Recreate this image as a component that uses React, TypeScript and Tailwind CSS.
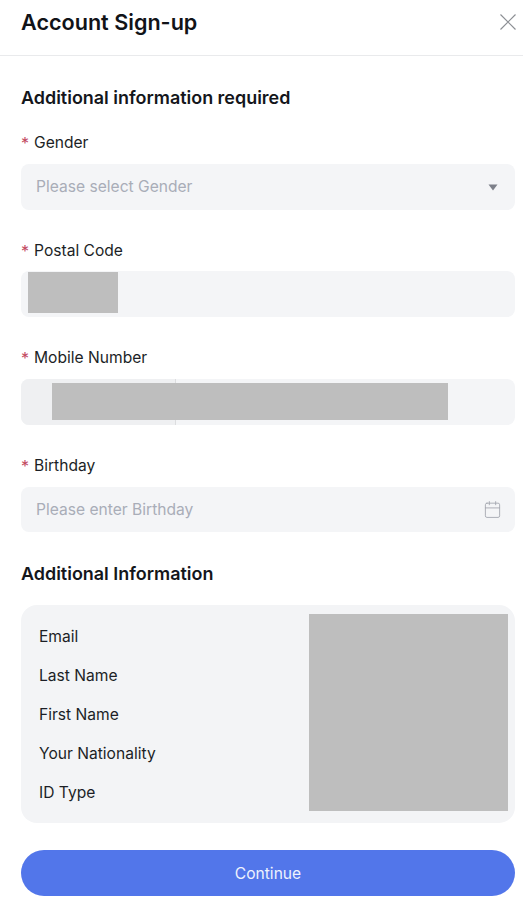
import { Calendar } from "lucide-react";

const font = { fontFamily: '"Inter", "Liberation Sans", sans-serif' };

function Label({ text }: { text: string }) {
  return (
    <div className="flex h-[22px] translate-y-[1px] items-center text-[15.6px] leading-[22px] text-[#1c1f26]">
      <span className="mr-[5px] text-[16px] text-[#c2495f]">*</span>
      {text}
    </div>
  );
}

const infoRows = ["Email", "Last Name", "First Name", "Your Nationality", "ID Type"];

export default function App() {
  return (
    <div className="flex h-[903px] w-[523px] flex-col overflow-hidden bg-white" style={font}>
      {/* Header */}
      <div className="flex h-[56px] items-start justify-between border-b border-[#e9eaec] pl-[21px] pr-[6px]">
        <h1 className="mt-[7px] text-[21.6px] font-semibold leading-[30px] text-[#111318]">
          Account Sign-up
        </h1>
        <svg width="18" height="18" viewBox="0 0 18 18" className="mt-[13px] text-[#8c8f94]">
          <path d="M1.5 1.5L16.5 16.5M16.5 1.5L1.5 16.5" stroke="currentColor" strokeWidth="1.2" fill="none" />
        </svg>
      </div>

      <div className="flex flex-col pl-[21px] pr-[8px]">
        <h2 className="mt-[29px] text-[17.95px] font-semibold leading-[26px] text-[#14161b]">
          Additional information required
        </h2>

        {/* Gender */}
        <div className="mt-[20px]">
          <Label text="Gender" />
        </div>
        <div className="mt-[11px] flex h-[46px] items-center justify-between rounded-lg bg-[#f4f5f7] pl-[15px] pr-[17px]">
          <span className="-translate-y-[0.5px] text-[15.6px] text-[#a9adb8]">Please select Gender</span>
          <svg width="10" height="7" viewBox="0 0 10 7" className="text-[#7d808a]">
            <path d="M0.5 0.5H9.5L5 6.5Z" fill="currentColor" />
          </svg>
        </div>

        {/* Postal Code */}
        <div className="mt-[29px]">
          <Label text="Postal Code" />
        </div>
        <div className="mt-[10px] flex h-[46px] items-start rounded-lg bg-[#f4f5f7] pl-[7px] pt-[1px]">
          <div className="h-[41px] w-[90px] bg-[#bebebe]" />
        </div>

        {/* Mobile Number */}
        <div className="mt-[29px]">
          <Label text="Mobile Number" />
        </div>
        <div className="relative mt-[11px] flex h-[46px] items-center overflow-hidden rounded-lg bg-[#f4f5f7]">
          <div className="h-full w-[155px] border-r border-[#dcdddf] bg-[#eff0f2]" />
          <div className="absolute left-[31px] top-[4px] h-[37px] w-[396px] bg-[#bebebe]" />
        </div>

        {/* Birthday */}
        <div className="mt-[29px]">
          <Label text="Birthday" />
        </div>
        <div className="mt-[11px] flex h-[45px] items-center justify-between rounded-lg bg-[#f4f5f7] pl-[15px] pr-[13px]">
          <span className="-translate-y-[0.5px] text-[15.6px] text-[#a9adb8]">Please enter Birthday</span>
          <Calendar className="h-[19px] w-[19px] text-[#a2a5ae]" strokeWidth={1.1} />
        </div>

        <h2 className="mt-[29px] text-[17.95px] font-semibold leading-[26px] text-[#14161b]">
          Additional Information
        </h2>

        {/* Info card */}
        <div className="mt-[18px] flex h-[218px] items-start justify-between rounded-2xl bg-[#f3f4f6] pl-[18px] pr-[7px] pt-[9px]">
          <div className="mt-[12px] flex flex-col gap-[17px]">
            {infoRows.map((row) => (
              <div key={row} className="text-[15.6px] leading-[22px] text-[#1c1f26]">
                {row}
              </div>
            ))}
          </div>
          <div className="h-[197px] w-[199px] bg-[#bebebe]" />
        </div>

        <button className="mt-[27px] flex h-[46px] items-center justify-center rounded-full bg-[#5276ea] pt-[1px] text-[15.6px] text-[#eef2fd]">
          Continue
        </button>
      </div>
    </div>
  );
}
